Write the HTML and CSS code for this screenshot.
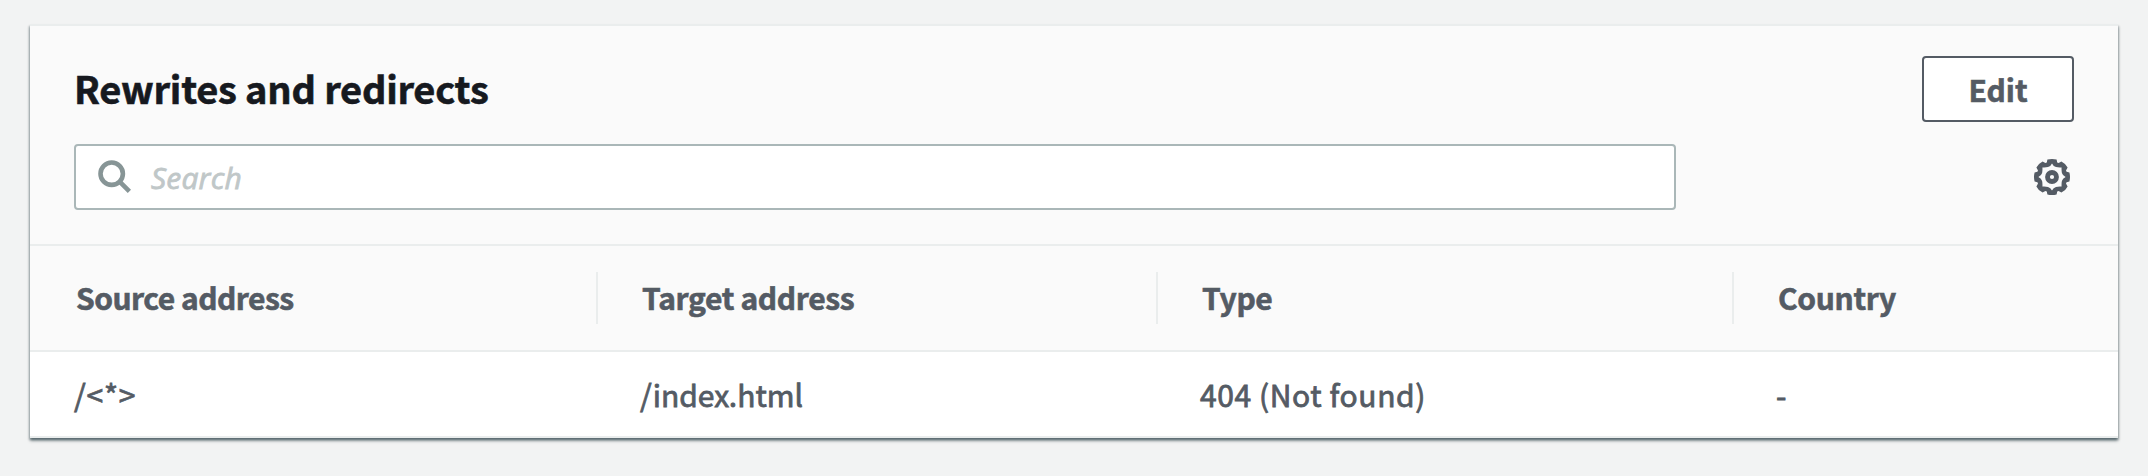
FILE: index.html
```html
<!DOCTYPE html>
<html lang="en">
<head>
<meta charset="utf-8">
<title>Rewrites and redirects</title>
<link rel="stylesheet" href="styles.css">
</head>
<body>
<section class="panel">
  <header class="panel-header">
    <div class="title-row">
      <h2 class="title">Rewrites and redirects</h2>
      <button class="edit" type="button">Edit</button>
    </div>
    <div class="tools-row">
      <div class="search">
        <svg class="search-icon" width="34" height="34" viewBox="0 0 34 34" fill="none" stroke="#879596" stroke-width="4.6"><circle cx="13.7" cy="13.7" r="11.2"/><path d="M21.6 21.6 31.4 31.4"/></svg>
        <span class="placeholder">Search</span>
      </div>
      <svg class="gear" width="36" height="36" viewBox="-18 -18 36 36" fill="#545b64" fill-rule="evenodd"><path d="M-4.600-17.400Q0-18.600 4.600-17.400L5.200-14.600L6.600-14L9.400-15.600Q13.600-13.600 15.600-9.400L14-6.600L14.600-5.200L17.400-4.600Q18.600 0 17.400 4.600L14.600 5.200L14 6.600L15.600 9.400Q13.600 13.600 9.400 15.600L6.600 14L5.200 14.600L4.600 17.400Q0 18.600-4.600 17.400L-5.200 14.600L-6.600 14L-9.400 15.600Q-13.600 13.600-15.600 9.400L-14 6.600L-14.600 5.200L-17.400 4.600Q-18.600 0-17.400-4.600L-14.600-5.200L-14-6.600L-15.600-9.400Q-13.600-13.600-9.400-15.600L-6.600-14L-5.200-14.600ZM0-13.600Q-1.400-10.600-4-9.900Q-6.500-9.400-9.600-9.600Q-9.400-6.500-9.900-4Q-10.600-1.400-13.600 0Q-10.600 1.400-9.900 4Q-9.400 6.500-9.600 9.600Q-6.500 9.400-4 9.900Q-1.400 10.600 0 13.600Q1.400 10.600 4 9.900Q6.500 9.400 9.600 9.600Q9.400 6.500 9.900 4Q10.600 1.400 13.600 0Q10.600-1.400 9.900-4Q9.400-6.500 9.600-9.600Q6.500-9.400 4-9.900Q1.400-10.600 0-13.600Z"/><circle r="4.500" fill="none" stroke="#545b64" stroke-width="4.800"/></svg>
    </div>
  </header>
  <div class="row head">
    <div class="cell source-head">Source address</div>
    <div class="cell">Target address</div>
    <div class="cell">Type</div>
    <div class="cell">Country</div>
  </div>
  <div class="row body">
    <div class="cell">/&lt;*&gt;</div>
    <div class="cell">/index.html</div>
    <div class="cell status">404 (Not found)</div>
    <div class="cell">-</div>
  </div>
</section>
</body>
</html>
```
FILE: styles.css
```css
* { box-sizing: border-box; }
body {
  margin: 0;
  padding: 24px 30px 38px;
  background: #f2f3f3;
  color: #545b64;
  font: 30px/44px "Noto Sans CJK JP", "Noto Sans", sans-serif;
}
.panel {
  height: 414px;
  background: #fff;
  border-top: 2px solid #eaeded;
  box-shadow: 0 3px 3px 0 rgba(0, 28, 36, .35), 1px 2px 2px 0 rgba(0, 28, 36, .25), -1px 2px 2px 0 rgba(0, 28, 36, .25);
}
.panel-header {
  height: 220px;
  padding: 30px 44px 0;
  background: #fafafa;
  border-bottom: 2px solid #eaeded;
}
.title-row { display: flex; justify-content: space-between; align-items: center; height: 66px; }
.title { margin: 0; padding-bottom: 2px; font-size: 38px; line-height: 56px; font-weight: 700; letter-spacing: -.22px; color: #16191f; white-space: nowrap; -webkit-text-stroke: .6px; }
.edit {
  width: 152px; height: 66px; padding: 0;
  border: 2px solid #545b64; border-radius: 4px; background: #fff;
  color: #545b64; font: inherit; font-weight: 700; -webkit-text-stroke: .6px;
}
.tools-row { display: flex; justify-content: space-between; align-items: center; margin-top: 22px; padding-right: 4px; }
.search {
  display: flex; align-items: center;
  width: 1602px; height: 66px; padding-left: 22px;
  border: 2px solid #aab7b8; border-radius: 4px; background: #fff;
}
.search-icon { flex: none; }
.placeholder { margin-left: 19px; padding-top: 2px; font-family: "Open Sans", sans-serif; font-style: italic; letter-spacing: .2px; color: #c0c7c8; -webkit-text-stroke: .8px; }
.row { display: grid; grid-template-columns: 568px 560px 576px 1fr; align-items: center; }
.head { height: 106px; background: #fafafa; border-bottom: 2px solid #eaeded; font-weight: 700; letter-spacing: -.34px; -webkit-text-stroke: .6px; }
.head .cell { height: 52px; line-height: 50px; padding-left: 44px; border-right: 2px solid #eaeded; }
.head .source-head { padding-left: 46px; letter-spacing: -.5px; }
.head .cell:last-child { border-right: 0; }
.body { height: 86px; border-bottom: 2px solid #eaeded; -webkit-text-stroke: .8px; }
.body .cell { padding-left: 42px; }
.body .cell:first-child { padding-left: 44px; letter-spacing: .8px; }
.body .status { letter-spacing: .6px; }
.cell { white-space: nowrap; }
```
